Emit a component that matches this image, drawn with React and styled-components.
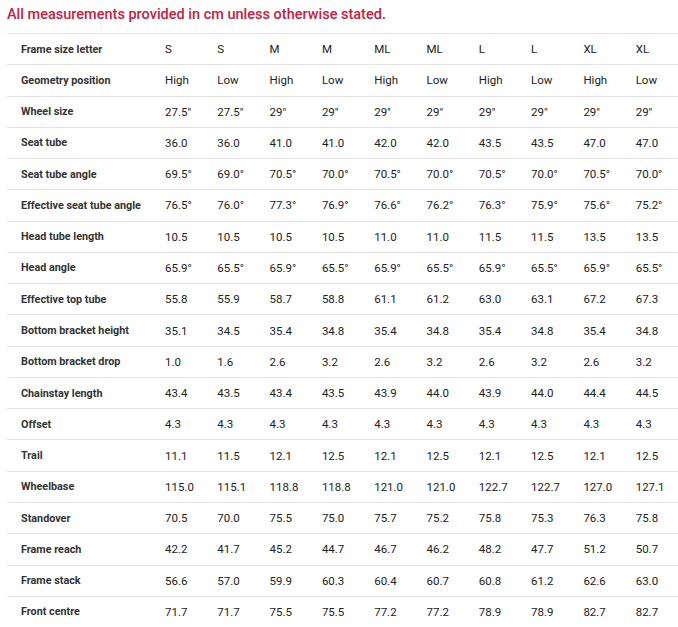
import React from 'react';
import styled, { createGlobalStyle } from 'styled-components';

const GlobalStyle = createGlobalStyle`
  html, body {
    margin: 0;
    padding: 0;
    background: #fff;
  }
  body {
    font-family: Roboto, "Liberation Sans", Arial, sans-serif;
    -webkit-font-smoothing: antialiased;
  }
`;

const sizes = [
  ['Frame size letter', 'S', 'S', 'M', 'M', 'ML', 'ML', 'L', 'L', 'XL', 'XL'],
  ['Geometry position', 'High', 'Low', 'High', 'Low', 'High', 'Low', 'High', 'Low', 'High', 'Low'],
  ['Wheel size', '27.5"', '27.5"', '29"', '29"', '29"', '29"', '29"', '29"', '29"', '29"'],
  ['Seat tube', '36.0', '36.0', '41.0', '41.0', '42.0', '42.0', '43.5', '43.5', '47.0', '47.0'],
  ['Seat tube angle', '69.5°', '69.0°', '70.5°', '70.0°', '70.5°', '70.0°', '70.5°', '70.0°', '70.5°', '70.0°'],
  ['Effective seat tube angle', '76.5°', '76.0°', '77.3°', '76.9°', '76.6°', '76.2°', '76.3°', '75.9°', '75.6°', '75.2°'],
  ['Head tube length', '10.5', '10.5', '10.5', '10.5', '11.0', '11.0', '11.5', '11.5', '13.5', '13.5'],
  ['Head angle', '65.9°', '65.5°', '65.9°', '65.5°', '65.9°', '65.5°', '65.9°', '65.5°', '65.9°', '65.5°'],
  ['Effective top tube', '55.8', '55.9', '58.7', '58.8', '61.1', '61.2', '63.0', '63.1', '67.2', '67.3'],
  ['Bottom bracket height', '35.1', '34.5', '35.4', '34.8', '35.4', '34.8', '35.4', '34.8', '35.4', '34.8'],
  ['Bottom bracket drop', '1.0', '1.6', '2.6', '3.2', '2.6', '3.2', '2.6', '3.2', '2.6', '3.2'],
  ['Chainstay length', '43.4', '43.5', '43.4', '43.5', '43.9', '44.0', '43.9', '44.0', '44.4', '44.5'],
  ['Offset', '4.3', '4.3', '4.3', '4.3', '4.3', '4.3', '4.3', '4.3', '4.3', '4.3'],
  ['Trail', '11.1', '11.5', '12.1', '12.5', '12.1', '12.5', '12.1', '12.5', '12.1', '12.5'],
  ['Wheelbase', '115.0', '115.1', '118.8', '118.8', '121.0', '121.0', '122.7', '122.7', '127.0', '127.1'],
  ['Standover', '70.5', '70.0', '75.5', '75.0', '75.7', '75.2', '75.8', '75.3', '76.3', '75.8'],
  ['Frame reach', '42.2', '41.7', '45.2', '44.7', '46.7', '46.2', '48.2', '47.7', '51.2', '50.7'],
  ['Frame stack', '56.6', '57.0', '59.9', '60.3', '60.4', '60.7', '60.8', '61.2', '62.6', '63.0'],
  ['Front centre', '71.7', '71.7', '75.5', '75.5', '77.2', '77.2', '78.9', '78.9', '82.7', '82.7'],
];

const Page = styled.div`
  padding-left: 7px;
`;

const Note = styled.p`
  margin: 0;
  height: 33px;
  padding-top: 6px;
  box-sizing: border-box;
  font-size: 14.5px;
  line-height: 18px;
  font-weight: 500;
  color: #c5203f;
  white-space: nowrap;
`;

const Table = styled.table`
  width: 671px;
  table-layout: fixed;
  border-collapse: collapse;
  border-spacing: 0;
`;

const Row = styled.tr`
  border-top: 1px solid #e4e4e4;
`;

const Label = styled.td`
  height: 30.28px;
  padding: 0 0 0 14px;
  font-size: 10.8px;
  font-weight: 700;
  color: #333;
  white-space: nowrap;
  vertical-align: middle;
`;

const Cell = styled.td`
  height: 30.28px;
  padding: 0 0 0 10px;
  font-size: 11.5px;
  font-weight: 400;
  color: #222;
  white-space: nowrap;
  vertical-align: middle;
`;

export default function App() {
  return (
    <Page>
      <GlobalStyle />
      <Note>All measurements provided in cm unless otherwise stated.</Note>
      <Table>
        <colgroup>
          <col style={{ width: 148 }} />
          {sizes[0].slice(1).map((_, i) => (
            <col key={i} />
          ))}
        </colgroup>
        <tbody>
          {sizes.map(([label, ...values]) => (
            <Row key={label}>
              <Label>{label}</Label>
              {values.map((v, i) => (
                <Cell key={i}>{v}</Cell>
              ))}
            </Row>
          ))}
        </tbody>
      </Table>
    </Page>
  );
}
